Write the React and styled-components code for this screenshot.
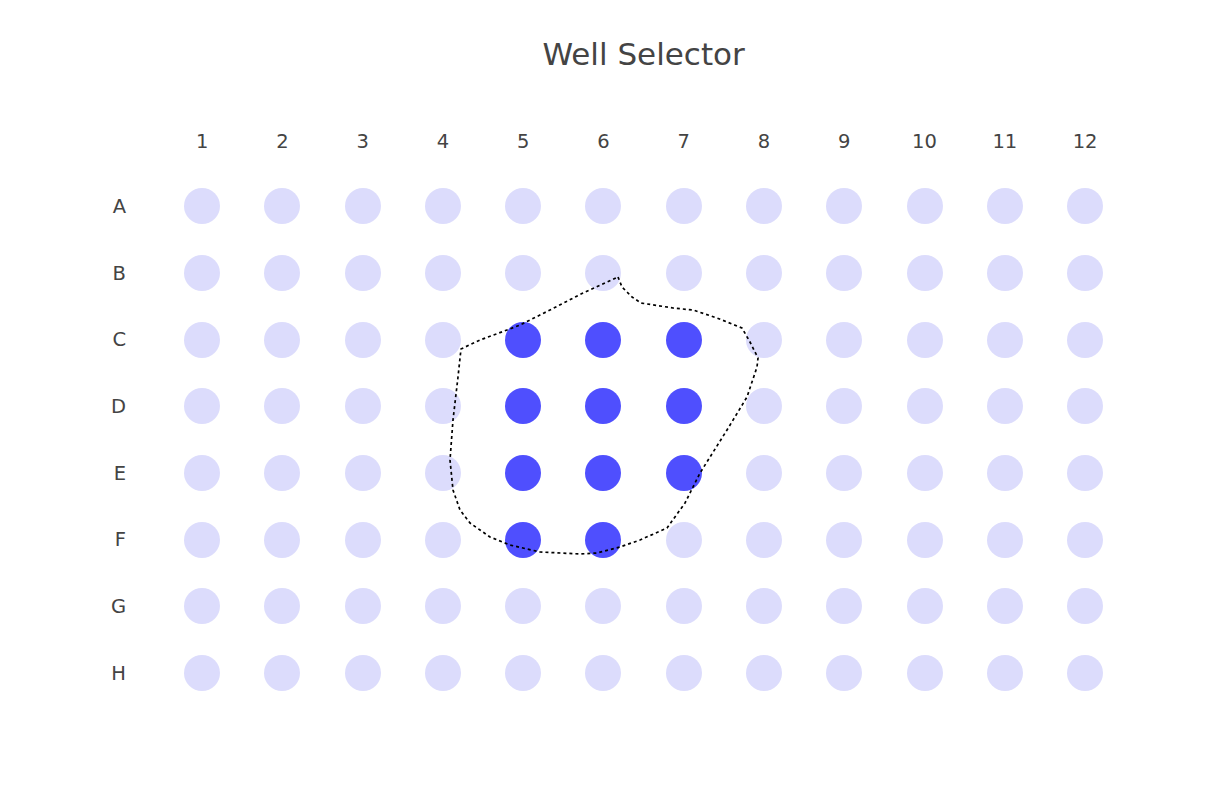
import styled, { createGlobalStyle } from 'styled-components';

const GlobalStyle = createGlobalStyle`
  html, body {
    margin: 0;
    padding: 0;
    background: #fff;
  }
`;

const Page = styled.div`
  position: relative;
  width: 1231px;
  height: 786px;
  background: #fff;
  font-family: "DejaVu Sans", Verdana, sans-serif;
  color: #444;
  overflow: hidden;
`;

const Plate = styled.div`
  display: grid;
  grid-template-columns: 162px repeat(12, 80.27px);
  grid-template-rows: 72px 64px repeat(8, 66.7px);
  padding-top: 37px;
`;

const Title = styled.div`
  grid-column: 2 / -1;
  align-self: start;
  text-align: center;
  font-size: 31px;
  line-height: 34px;
  white-space: nowrap;
`;

const Corner = styled.div`
  grid-column: 1;
`;

const ColLabel = styled.div`
  display: flex;
  align-items: center;
  justify-content: center;
  font-size: 19.5px;
`;

const RowLabel = styled.div`
  display: flex;
  align-items: center;
  justify-content: flex-end;
  padding-right: 36px;
  font-size: 19.5px;
`;

const Cell = styled.div`
  display: flex;
  align-items: center;
  justify-content: center;
`;

const Well = styled.div`
  width: 36px;
  height: 36px;
  border-radius: 50%;
  background: ${props => props.selected ? '#4f4ffe' : '#dcdcfc'};
`;

const Lasso = styled.svg`
  position: absolute;
  left: 0;
  top: 0;
  pointer-events: none;
`;

const rows = ['A', 'B', 'C', 'D', 'E', 'F', 'G', 'H'];
const cols = [1, 2, 3, 4, 5, 6, 7, 8, 9, 10, 11, 12];
const selected = ['C5', 'C6', 'C7', 'D5', 'D6', 'D7', 'E5', 'E6', 'E7', 'F5', 'F6'];

// lasso outline drawn over the plate
const lassoPoints = [
  [618, 277], [622, 287], [632, 297], [641, 303], [673, 308], [693, 310],
  [717, 318], [742, 328], [750, 342], [758, 358], [757, 367], [747, 397],
  [727, 430], [700, 473], [685, 503], [667, 528], [640, 540], [620, 547],
  [597, 553], [580, 554], [540, 552], [510, 545], [490, 537], [470, 523],
  [460, 510], [453, 490], [450, 460], [453, 420], [458, 377], [461, 349],
  [480, 340], [507, 330], [520, 325], [550, 310], [583, 293], [618, 277],
];

const App = () => {
    return (
        <Page>
            <GlobalStyle />
            <Plate>
                <Title>Well Selector</Title>
                <Corner />
                {cols.map(c => <ColLabel key={c}>{c}</ColLabel>)}
                {rows.map(r => [
                    <RowLabel key={r}>{r}</RowLabel>,
                    ...cols.map(c => (
                        <Cell key={r + c}>
                            <Well selected={selected.includes(r + c)} />
                        </Cell>
                    ))
                ])}
            </Plate>
            <Lasso width="1231" height="786" viewBox="0 0 1231 786">
                <polyline
                    points={lassoPoints.map(p => p.join(',')).join(' ')}
                    fill="none"
                    stroke="#000"
                    strokeWidth="1.7"
                    strokeDasharray="3 3"
                    strokeLinejoin="round"
                />
            </Lasso>
        </Page>
    );
};

export default App;
